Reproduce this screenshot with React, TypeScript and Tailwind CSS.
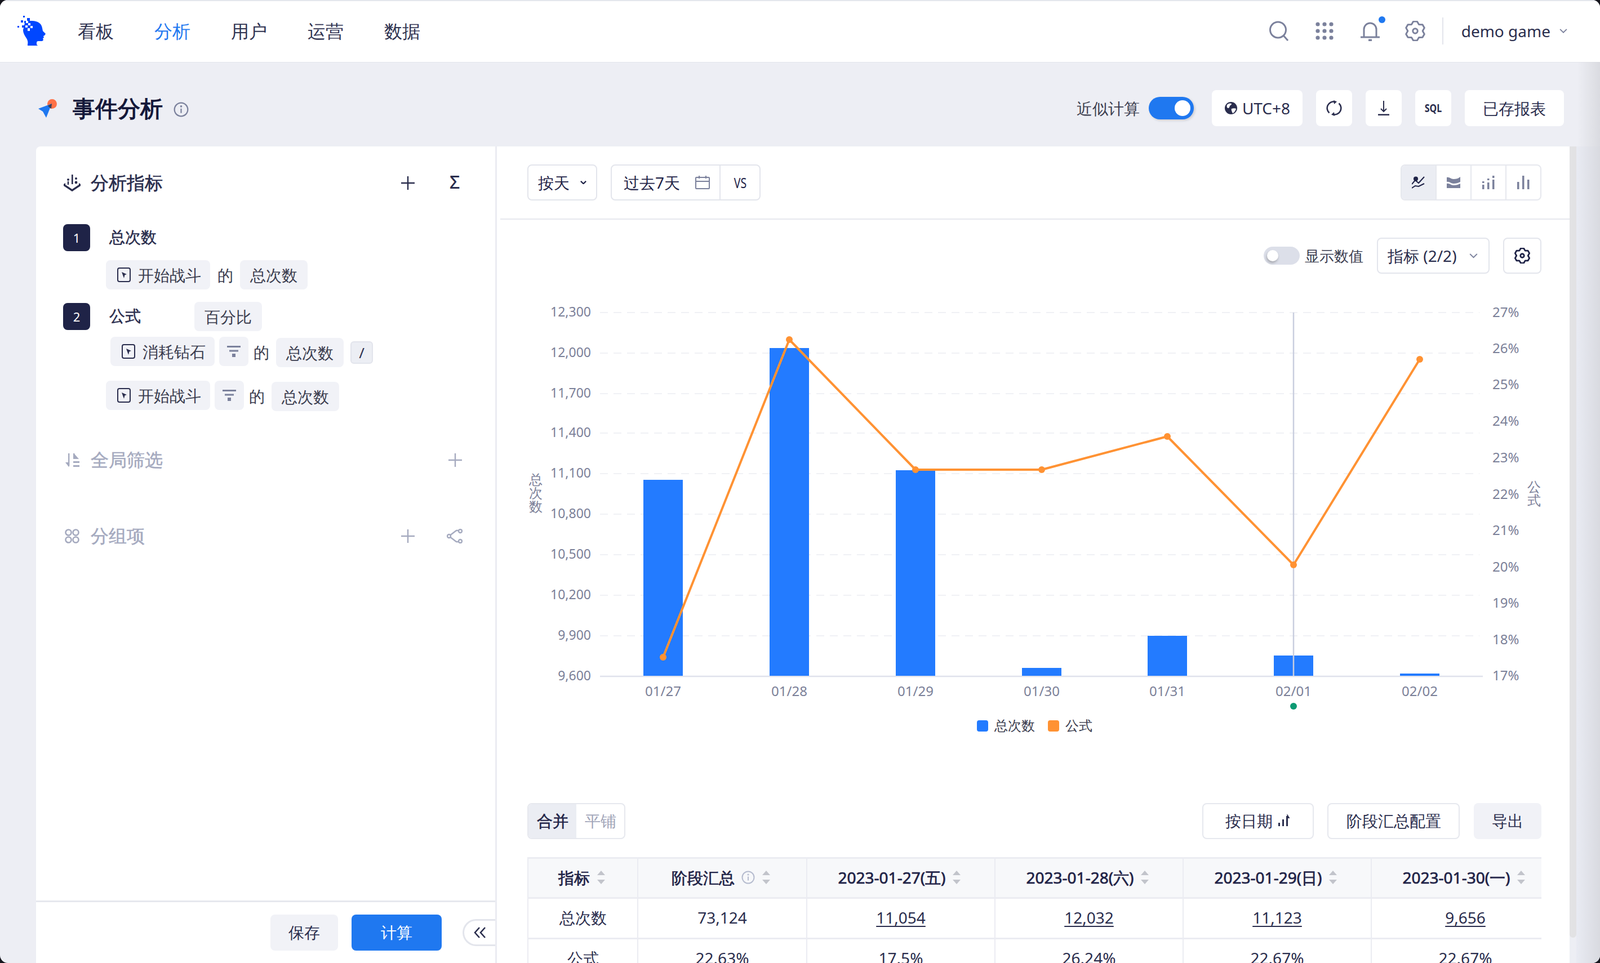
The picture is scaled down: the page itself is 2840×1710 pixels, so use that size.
import type { ReactNode } from 'react';

const gearPath = (R: number, r: number, c: number) => {
  const pts: string[] = [];
  for (let i = 0; i < 6; i++) {
    const a = (i * 60 - 90) * (Math.PI / 180);
    [
      [r, -30],
      [R, -11],
      [R, 11],
    ].forEach(([rad, off]) => {
      const t = a + (off * Math.PI) / 180;
      pts.push(`${(c + rad * Math.cos(t)).toFixed(2)} ${(c + rad * Math.sin(t)).toFixed(2)}`);
    });
  }
  return `M${pts.join('L')}Z`;
};

const Gear = ({ size, color, sw = 2 }: { size: number; color: string; sw?: number }) => (
  <svg width={size} height={size} viewBox="0 0 24 24" fill="none" stroke={color} strokeWidth={sw} strokeLinejoin="round">
    <path d={gearPath(11.5, 8.8, 12)} />
    <circle cx="12" cy="12" r="2.8" />
  </svg>
);

const Logo = () => (
  <svg width="50" height="54" viewBox="0 0 50 54" fill="#0047ff">
    <path d="M14 9h12c10 0 17 5 18 13l1 5 5 5-2 3-2 1 1 3-2 1 1 3-2 2h-7c-2 0-3 1-3 3v3l2 2H18v-2c1-4 0-8-2-11-3-5-6-9-6-15z" />
    <g fill="#fff">
      <rect x="15" y="9" width="4" height="4" />
      <rect x="19" y="13" width="4" height="4" />
      <rect x="14" y="17" width="4" height="4" />
      <rect x="23" y="18" width="4" height="4" />
      <rect x="18" y="22" width="4" height="5" />
    </g>
    <rect x="10" y="0" width="3" height="3" />
    <rect x="17" y="4" width="5" height="5" />
    <rect x="6" y="8" width="4" height="4" />
    <rect x="12" y="9" width="3" height="4" />
    <rect x="0" y="18" width="3" height="3" />
    <rect x="8" y="17" width="4" height="4" />
  </svg>
);

const EventIcon = () => (
  <svg width="24" height="26" viewBox="0 0 24 26" fill="none">
    <rect x="1" y="1" width="22" height="24" rx="3" stroke="#2a2d4d" strokeWidth="2" />
    <path d="M8 8l9 4-3.500 1.200L12 19z" fill="#2a2d4d" />
  </svg>
);

const FilterIcon = () => (
  <svg width="24" height="20" viewBox="0 0 24 20" fill="#7b819c">
    <rect x="0" y="0" width="24" height="3" />
    <rect x="4" y="7.500" width="16" height="3" />
    <rect x="9" y="14" width="6" height="6" />
  </svg>
);

const Plus = ({ color, size = 24 }: { color: string; size?: number }) => (
  <svg width={size} height={size} viewBox="0 0 24 24" stroke={color} strokeWidth="2.4">
    <path d="M12 0v24M0 12h24" />
  </svg>
);

const Sort = () => (
  <svg width="16" height="24" viewBox="0 0 16 24" fill="#c2c4cb" className="shrink-0">
    <path d="M8 0l7 8H1zM1 16h14l-7 8z" />
  </svg>
);

const Info = ({ size, color }: { size: number; color: string }) => (
  <svg width={size} height={size} viewBox="0 0 24 24" fill="none" stroke={color} strokeWidth="2">
    <circle cx="12" cy="12" r="10.500" />
    <path d="M12 10.500v7" />
    <circle cx="12" cy="7" r="0.600" fill={color} />
  </svg>
);

const Chevron = ({ color = '#7b819c', w = 16, sw = 2.2 }: { color?: string; w?: number; sw?: number }) => (
  <svg width={w} height={w * 0.6} viewBox="0 0 16 10" fill="none" stroke={color} strokeWidth={sw}>
    <path d="M1 1l7 7 7-7" />
  </svg>
);

const Chip = ({ children, className = '' }: { children: ReactNode; className?: string }) => (
  <div className={`flex h-[52px] items-center rounded-[8px] bg-[#f1f2f7] text-[28px] text-[#3a3c4e] ${className}`}>
    {children}
  </div>
);

const EventChip = ({ name }: { name: string }) => (
  <Chip className="w-[185px] pl-[20px] gap-[13px] text-[#2a2d4d]">
    <EventIcon />
    {name}
  </Chip>
);

const FilterChip = () => (
  <Chip className="ml-[8px] w-[52px] justify-center">
    <FilterIcon />
  </Chip>
);

const CountChip = ({ className = '' }: { className?: string }) => (
  <Chip className={`w-[120px] justify-center ${className}`}>总次数</Chip>
);

const De = ({ className = '' }: { className?: string }) => (
  <span className={`text-[28px] text-[#3a3c4e] ${className}`}>的</span>
);

const Badge = ({ n }: { n: number }) => (
  <div className="flex h-[48px] w-[48px] shrink-0 items-center justify-center rounded-[8px] bg-[#1f2347] text-[22px] text-white">
    {n}
  </div>
);

const WhiteBtn = ({ children, className = '' }: { children: ReactNode; className?: string }) => (
  <div className={`flex h-[64px] items-center justify-center rounded-[8px] bg-white text-[#2a2d4d] ${className}`}>
    {children}
  </div>
);

const gridYs = [555, 627, 699, 769, 841, 913, 985, 1057, 1129, 1201];
const leftLabels = ['12,300', '12,000', '11,700', '11,400', '11,100', '10,800', '10,500', '10,200', '9,900', '9,600'];
const rightLabels: [string, number][] = [
  ['27%', 555],
  ['26%', 619],
  ['25%', 683],
  ['24%', 748],
  ['23%', 813],
  ['22%', 878],
  ['21%', 942],
  ['20%', 1007],
  ['19%', 1071],
  ['18%', 1136],
  ['17%', 1200],
];
const days = [
  { x: 1177, label: '01/27', top: 852, line: 1167 },
  { x: 1401, label: '01/28', top: 618, line: 603 },
  { x: 1625, label: '01/29', top: 835, line: 834 },
  { x: 1849, label: '01/30', top: 1186, line: 834 },
  { x: 2072, label: '01/31', top: 1129, line: 775 },
  { x: 2296, label: '02/01', top: 1164, line: 1003 },
  { x: 2520, label: '02/02', top: 1196, line: 638 },
];

const Chart = () => (
  <div className="relative">
    <svg width="1904" height="830" viewBox="882 500 1904 830" className="block font-[Inter,'Noto_Sans_CJK_SC',sans-serif]">
      {gridYs.map((y) => (
        <line key={y} x1="1065" x2="2626" y1={y} y2={y} stroke="#f0f1f5" strokeWidth="2" strokeDasharray="14 10" />
      ))}
      <line x1="1065" x2="2632" y1="1201" y2="1201" stroke="#e0e2ec" strokeWidth="2.500" />
      {leftLabels.map((t, i) => (
        <text key={t} x="1049" y={gridYs[i] + 7} textAnchor="end" fontSize="23" fill="#7b8098">
          {t}
        </text>
      ))}
      {rightLabels.map(([t, y]) => (
        <text key={t} x="2649" y={y + 8} fontSize="24" fill="#7b8098">
          {t}
        </text>
      ))}
      {days.map((d) => (
        <rect key={d.x} x={d.x - 35} y={d.top} width="70" height={1200 - d.top} fill="#237bff" />
      ))}
      {days.map((d) => (
        <text key={d.label} x={d.x} y="1236" textAnchor="middle" fontSize="24" fill="#7b8098">
          {d.label}
        </text>
      ))}
      <line x1="2296" x2="2296" y1="555" y2="1200" stroke="#c9cede" strokeWidth="2.500" />
      <polyline
        points={days.map((d) => `${d.x},${d.line}`).join(' ')}
        fill="none"
        stroke="#ff9233"
        strokeWidth="4"
        strokeLinejoin="round"
      />
      {days.map((d) => (
        <circle key={d.x} cx={d.x} cy={d.line} r="6" fill="#ff9233" />
      ))}
      <circle cx="2296" cy="1254" r="6" fill="#0e9a73" />
      <rect x="1734" y="1279" width="20" height="20" rx="4" fill="#237bff" />
      <text x="1765" y="1297" fontSize="24" fill="#3a3c4e">
        总次数
      </text>
      <rect x="1860" y="1279" width="20" height="20" rx="4" fill="#ff9233" />
      <text x="1891" y="1297" fontSize="24" fill="#3a3c4e">
        公式
      </text>
    </svg>
    <div className="absolute left-[57px] top-[339px] w-[24px] text-[24px] leading-[24px] text-[#7b8098]">总次数</div>
    <div className="absolute left-[1829px] top-[352px] w-[24px] text-[24px] leading-[24px] text-[#7b8098]">公式</div>
  </div>
);

const dateCols = [
  ['2023-01-27(五)', '11,054', '17.5%'],
  ['2023-01-28(六)', '12,032', '26.24%'],
  ['2023-01-29(日)', '11,123', '22.67%'],
  ['2023-01-30(一)', '9,656', '22.67%'],
];

const headCell =
  'flex items-center justify-center gap-[12px] border-r-[2px] border-[#ebecf2] bg-[#f7f8fa] pb-[3px] text-[#1f2347] [-webkit-text-stroke:0.7px_#1f2347]';
const bodyCell = 'flex items-center justify-center border-r-[2px] border-t-[3px] border-[#ebecf2] pb-[3px] text-[#2a2d4d]';

const Table = () => (
  <div className="w-[1800px] overflow-hidden border-t-[3px] border-l-[2px] border-[#ebecf2] font-['Liberation_Sans','Noto_Sans_CJK_SC',sans-serif] text-[28px]">
    <div className="grid w-[2134px] grid-cols-[195px_300px_334px_334px_334px_637px] grid-rows-[68px_72px_72px]">
      <div className={`${headCell} pr-[4px]`}>
        指标
        <Sort />
      </div>
      <div className={`${headCell} pr-[4px]`}>
        阶段汇总
        <Info size={24} color="#b6bccf" />
        <Sort />
      </div>
      {dateCols.map((c) => (
        <div key={c[0]} className={`${headCell} ${c[0].endsWith('(一)') ? 'pr-[307px]' : 'pr-[4px]'}`}>
          {c[0]}
          <Sort />
        </div>
      ))}
      <div className={bodyCell}>总次数</div>
      <div className={bodyCell}>73,124</div>
      {dateCols.map((c) => (
        <div key={c[0]} className={`${bodyCell} ${c[0].endsWith('(一)') ? 'pr-[303px]' : ''}`}>
          <span className="underline underline-offset-[4px]">{c[1]}</span>
        </div>
      ))}
      <div className={bodyCell}>公式</div>
      <div className={bodyCell}>22.63%</div>
      {dateCols.map((c) => (
        <div key={c[0]} className={`${bodyCell} ${c[0].endsWith('(一)') ? 'pr-[303px]' : ''}`}>
          {c[2]}
        </div>
      ))}
    </div>
  </div>
);

export default function App() {
  return (
    <div className="h-[1710px] w-[2840px] overflow-hidden bg-[#15151c]">
      <div className="relative flex h-full flex-col overflow-hidden rounded-[14px] bg-[#edeef4] font-[Inter,'Noto_Sans_CJK_SC',sans-serif]">
        <header className="flex h-[111px] shrink-0 items-center border-b-[1px] border-t-[2px] border-b-[#e3e5ec] border-t-[#e3e6ec] bg-white pb-[2px] pl-[31px] pr-[58px]">
          <Logo />
          <nav className="ml-[57px] flex gap-[72px] text-[32px] text-[#2f3250]">
            <span>看板</span>
            <span className="text-[#1f78f0]">分析</span>
            <span>用户</span>
            <span>运营</span>
            <span>数据</span>
          </nav>
          <div className="ml-auto flex items-center">
            <svg width="36" height="36" viewBox="0 0 36 36" fill="none" stroke="#7b819c" strokeWidth="3">
              <circle cx="16.500" cy="16" r="14" />
              <path d="M26 26l8 9" />
            </svg>
            <svg width="32" height="32" viewBox="0 0 32 32" fill="#7b819c" className="ml-[47px]">
              {[4, 16, 28].map((y) =>
                [4, 16, 28].map((x) => <circle key={`${x}-${y}`} cx={x} cy={y} r="3.600" />),
              )}
            </svg>
            <div className="relative ml-[47px]">
              <svg width="36" height="36" viewBox="0 0 36 36" fill="none" stroke="#7b819c" strokeWidth="3" className="block">
                <path d="M7 28V15a11 11 0 0 1 22 0v13" />
                <path d="M1 29h34" />
                <path d="M15 34.500h6" strokeWidth="4" />
              </svg>
              <span className="absolute right-[-9px] top-[-8px] h-[12px] w-[12px] rounded-full bg-[#1f78f0]" />
            </div>
            <div className="ml-[44px]">
              <Gear size={36} color="#7b819c" />
            </div>
            <span className="ml-[30px] h-[48px] w-[2px] bg-[#e3e5ec]" />
            <span className="ml-[32px] text-[28px] text-[#2a2d4d]">demo game</span>
            <span className="ml-[16px]">
              <Chevron w={14} />
            </span>
          </div>
        </header>

        <div className="flex h-[149px] shrink-0 items-start pl-[68px] pr-[64px] pt-[49px]">
          <div className="flex h-[64px] items-center">
            <svg width="33" height="33" viewBox="0 0 33 33">
              <circle cx="24.500" cy="8.500" r="8.500" fill="#ff7248" />
              <path d="M24 8L0 17l8 5 6 11z" fill="#1f78f0" />
              <path d="M24 8l-7 4 3 3 3 2z" fill="#3d3f55" />
            </svg>
            <h1 className="ml-[28px] text-[40px] font-semibold leading-none text-[#14183a]">事件分析</h1>
            <span className="ml-[19px] mt-[4px]">
              <Info size={27} color="#7b819c" />
            </span>
          </div>
          <div className="ml-auto flex h-[64px] items-center">
            <span className="text-[28px] text-[#3a3c4e]">近似计算</span>
            <div className="relative ml-[16px] h-[40px] w-[80px] rounded-full bg-[#1f78f0] shadow-[2px_2px_4px_rgba(0,0,0,0.15)]">
              <span className="absolute right-[6px] top-[6px] h-[28px] w-[28px] rounded-full bg-white" />
            </div>
            <WhiteBtn className="ml-[32px] w-[161px] gap-[8px] font-['Liberation_Sans','Noto_Sans_CJK_SC',sans-serif] text-[28px]">
              <svg width="24" height="24" viewBox="0 0 24 24">
                <circle cx="12" cy="12" r="11" fill="#2a2d4d" />
                <path d="M5 6c3-3 6-3 8-2 0 3-2 2-3 4s-1 4-3 4-3-3-2-6zM13 13c3-1 6-1 8 0-1 4-4 8-6 8-1-2-3-6-2-8z" fill="#fff" />
              </svg>
              UTC+8
            </WhiteBtn>
            <WhiteBtn className="ml-[24px] w-[64px]">
              <svg width="28" height="28" viewBox="0 0 28 28" fill="none" stroke="#2a2d4d" strokeWidth="2.600">
                <path d="M5.500 22.500A11.500 11.500 0 0 1 15 2.600" />
                <path d="M22.500 5.500A11.500 11.500 0 0 1 13 25.400" />
                <path d="M13 0l6 2.500-5 4.500z" fill="#2a2d4d" stroke="none" />
                <path d="M15 28l-6-2.500 5-4.500z" fill="#2a2d4d" stroke="none" />
              </svg>
            </WhiteBtn>
            <WhiteBtn className="ml-[24px] w-[64px]">
              <svg width="24" height="26" viewBox="0 0 24 26" fill="none" stroke="#2a2d4d" strokeWidth="2">
                <path d="M12 0v18M7 14l5 5 5-5" />
                <path d="M2 25h20" strokeWidth="3" />
              </svg>
            </WhiteBtn>
            <WhiteBtn className="ml-[24px] w-[64px]">
              <span className="inline-block scale-x-[0.8] text-[20px] font-bold">SQL</span>
            </WhiteBtn>
            <WhiteBtn className="ml-[24px] w-[176px] text-[28px]">已存报表</WhiteBtn>
          </div>
        </div>

        <main className="flex min-h-0 flex-1 pl-[64px]">
          <aside className="flex w-[818px] shrink-0 flex-col rounded-tl-[8px] border-r-[3px] border-[#ebecf2] bg-white pt-[49px]">
            <div className="flex h-[32px] items-center pl-[49px]">
              <svg width="30" height="30" viewBox="0 0 30 30" fill="#2a2d4d">
                <rect x="14" y="0" width="2.600" height="17" />
                <circle cx="8" cy="9" r="2" />
                <rect x="6.800" y="12" width="2.400" height="6" />
                <circle cx="22" cy="7" r="2" />
                <circle cx="22" cy="14" r="2.400" />
                <path d="M0 17l3-2v3l12 8 12-8v-3l3 2v3L15 30 0 20z" />
              </svg>
              <span className="mb-[2px] ml-[18px] text-[32px] font-medium text-[#2a2d4d] [-webkit-text-stroke:0.6px_#2a2d4d]">分析指标</span>
              <span className="ml-[423px]">
                <Plus color="#2a2d4d" />
              </span>
              <span className="mb-[4px] ml-[62px] text-[32px] font-medium leading-none text-[#2a2d4d]">Σ</span>
            </div>

            <div className="mt-[57px] flex h-[48px] items-center pl-[48px]">
              <Badge n={1} />
              <span className="mb-[5px] ml-[34px] text-[28px] font-medium text-[#2a2d4d] [-webkit-text-stroke:0.5px_#2a2d4d]">总次数</span>
            </div>
            <div className="ml-[124px] mt-[16px] flex items-center">
              <EventChip name="开始战斗" />
              <De className="ml-[13px]" />
              <CountChip className="ml-[12px]" />
            </div>

            <div className="mt-[22px] flex h-[50px] items-start pl-[48px]">
              <div className="mt-[2px] flex items-center">
                <Badge n={2} />
                <span className="mb-[5px] ml-[34px] text-[28px] font-medium text-[#2a2d4d] [-webkit-text-stroke:0.5px_#2a2d4d]">公式</span>
              </div>
              <Chip className="ml-[95px] h-[48px] w-[120px] justify-center">百分比</Chip>
            </div>

            <div className="ml-[132px] mt-[12px] flex h-[54px] items-start">
              <EventChip name="消耗钻石" />
              <FilterChip />
              <De className="ml-[9px] mt-[6px]" />
              <CountChip className="ml-[12px] mt-[2px]" />
              <div className="ml-[12px] mt-[8px] flex h-[40px] w-[40px] items-center justify-center rounded-[6px] border-[2px] border-[#e2e4ec] bg-[#eceef4] text-[26px] text-[#2a2d4d]">
                /
              </div>
            </div>

            <div className="ml-[124px] mt-[24px] flex h-[54px] items-start">
              <EventChip name="开始战斗" />
              <FilterChip />
              <De className="ml-[9px] mt-[6px]" />
              <CountChip className="ml-[12px] mt-[2px]" />
            </div>

            <div className="mt-[71px] flex h-[32px] items-center pl-[52px] text-[32px] font-medium text-[#a5aabf]">
              <svg width="26" height="26" viewBox="0 0 26 26" fill="#a5aabf">
                <rect x="5" y="1" width="2.400" height="22" />
                <path d="M0 17l6 8 1-1V17z" />
                <rect x="14" y="1" width="2.400" height="10" />
                <path d="M16 2l8 9h-8z" />
                <rect x="14" y="15" width="11" height="3" />
                <rect x="14" y="22" width="11" height="3" />
              </svg>
              <span className="mb-[3px] ml-[19px] [-webkit-text-stroke:0.5px_#a5aabf]">全局筛选</span>
              <span className="ml-[507px]">
                <Plus color="#a5aabf" />
              </span>
            </div>

            <div className="mt-[103px] flex h-[32px] items-center pl-[51px] text-[32px] font-medium text-[#a5aabf]">
              <svg width="26" height="26" viewBox="0 0 26 26" fill="none" stroke="#a5aabf" strokeWidth="2.600">
                <circle cx="6.500" cy="6.500" r="5" />
                <circle cx="19.500" cy="6.500" r="5" />
                <circle cx="6.500" cy="19.500" r="5" />
                <circle cx="19.500" cy="19.500" r="5" />
              </svg>
              <span className="mb-[3px] ml-[20px] [-webkit-text-stroke:0.5px_#a5aabf]">分组项</span>
              <span className="ml-[455px]">
                <Plus color="#a5aabf" />
              </span>
              <svg width="28" height="26" viewBox="0 0 28 26" fill="none" stroke="#a5aabf" strokeWidth="2.400" className="ml-[57px]">
                <circle cx="4" cy="13" r="3" />
                <circle cx="24" cy="4" r="3" />
                <circle cx="24" cy="22" r="3" />
                <path d="M6.500 11L17 3h4M6.500 15L17 23h4" />
              </svg>
            </div>

            <div className="mt-auto flex h-[111px] shrink-0 items-start border-t-[3px] border-[#e6e8ee] pl-[416px] pt-[22px]">
              <div className="flex h-[64px] w-[120px] items-center justify-center rounded-[8px] bg-[#f1f2f7] pb-[2px] text-[28px] text-[#2a2d4d]">
                保存
              </div>
              <div className="ml-[24px] flex h-[64px] w-[160px] items-center justify-center rounded-[8px] bg-[#1f78f0] pb-[2px] text-[28px] text-white">
                计算
              </div>
              <div className="ml-[37px] mt-[8px] flex h-[48px] w-[58px] items-center justify-center rounded-l-full border-[3px] border-r-0 border-[#e3e5ec] bg-white">
                <svg width="22" height="22" viewBox="0 0 22 22" fill="none" stroke="#2a2d4d" strokeWidth="2.600">
                  <path d="M10 2L2 11l8 9M20 2l-8 9 8 9" />
                </svg>
              </div>
            </div>
          </aside>

          <section className="flex min-w-0 flex-1 flex-col bg-white">
            <div className="ml-[6px] flex h-[130px] shrink-0 items-start border-b-[2px] border-[#e6e8ee] pl-[48px] pr-[50px] pt-[32px]">
              <div className="flex h-[64px] w-[124px] items-center rounded-[8px] border-[2px] border-[#e3e5ec] pl-[17px] text-[28px] text-[#1f2347]">
                按天
                <span className="ml-[19px]">
                  <Chevron color="#1f2347" w={11} sw={3.4} />
                </span>
              </div>
              <div className="ml-[24px] flex h-[64px] w-[266px] items-center rounded-[8px] border-[2px] border-[#e3e5ec] text-[28px] text-[#1f2347]">
                <div className="flex h-full w-[193px] items-center border-r-[2px] border-[#e3e5ec] pl-[21px]">
                  过去7天
                  <svg width="26" height="24" viewBox="0 0 26 24" fill="none" stroke="#7b819c" strokeWidth="2" className="ml-[27px]">
                    <rect x="1" y="3" width="24" height="20" rx="1" />
                    <path d="M1 10h24M7 0v5M19 0v5" />
                  </svg>
                </div>
                <span className="ml-[20px] inline-block scale-x-75 font-['Liberation_Sans',sans-serif] text-[26px]">VS</span>
              </div>
              <div className="ml-auto flex h-[64px] w-[250px] overflow-hidden rounded-[8px] border-[2px] border-[#e6e8ee]">
                <div className="flex flex-1 items-center justify-center border-r-[2px] border-[#e6e8ee] bg-[#ebedf3]">
                  <svg width="24" height="22" viewBox="0 0 24 22" fill="none" stroke="#1f2347" strokeWidth="2">
                    <circle cx="7" cy="4.500" r="4" fill="#1f2347" stroke="none" />
                    <path d="M0 14l6-7 6 5 10-11" />
                    <path d="M0 21l6-4 6 1 10-5" />
                  </svg>
                </div>
                <div className="flex flex-1 items-center justify-center border-r-[2px] border-[#e6e8ee]">
                  <svg width="24" height="20" viewBox="0 0 24 20" fill="#7b819c">
                    <path d="M0 1c5-1 7 3 12 3 5 0 8-1 12-4v9c-4 2-7 3-12 3-5 0-7-4-12-3z" />
                    <path d="M0 12c5-1 7 3 12 3 5 0 8-1 12-3v8H0z" />
                  </svg>
                </div>
                <div className="flex flex-1 items-center justify-center border-r-[2px] border-[#e6e8ee]">
                  <svg width="22" height="24" viewBox="0 0 22 24" fill="#7b819c">
                    <rect x="0" y="10" width="3.500" height="3" />
                    <rect x="0" y="16" width="3.500" height="8" />
                    <rect x="9" y="5" width="3.500" height="3" />
                    <rect x="9" y="12" width="3.500" height="12" />
                    <rect x="18" y="0" width="3.500" height="4" />
                    <rect x="18" y="7" width="3.500" height="17" />
                  </svg>
                </div>
                <div className="flex flex-1 items-center justify-center">
                  <svg width="22" height="24" viewBox="0 0 22 24" fill="#7b819c">
                    <rect x="0" y="11" width="3.500" height="13" />
                    <rect x="9" y="0" width="3.500" height="24" />
                    <rect x="18" y="7" width="3.500" height="17" />
                  </svg>
                </div>
              </div>
            </div>

            <div className="mt-[32px] flex h-[64px] shrink-0 items-center justify-end pr-[50px]">
              <div className="relative h-[32px] w-[64px] rounded-full bg-[#dcdfe9]">
                <span className="absolute left-[6px] top-[6px] h-[20px] w-[20px] rounded-full bg-white shadow-[-1px_3px_4px_rgba(0,0,0,0.25)]" />
              </div>
              <span className="ml-[9px] text-[26px] text-[#3a3c4e]">显示数值</span>
              <div className="ml-[24px] flex h-[64px] w-[200px] items-center rounded-[8px] border-[2px] border-[#e3e5ec] pl-[17px] text-[28px] text-[#2a2d4d]">
                指标 (2/2)
                <span className="ml-[22px]">
                  <Chevron w={15} />
                </span>
              </div>
              <div className="ml-[24px] flex h-[64px] w-[68px] items-center justify-center rounded-[8px] border-[2px] border-[#e3e5ec]">
                <Gear size={28} color="#1f2347" sw={2.400} />
              </div>
            </div>

            <div className="mt-[14px] shrink-0">
              <Chart />
            </div>

            <div className="ml-[54px] mr-[50px] mt-[96px] flex h-[64px] shrink-0 items-center text-[28px] text-[#2a2d4d]">
              <div className="flex h-full w-[174px] overflow-hidden rounded-[8px] border-[2px] border-[#e6e8ee]">
                <div className="flex w-[85px] items-center justify-center bg-[#ebedf3] pb-[2px] text-[#1f2347] [-webkit-text-stroke:0.6px_#1f2347]">合并</div>
                <div className="flex flex-1 items-center justify-center pb-[2px] text-[#a0a4b8]">平铺</div>
              </div>
              <div className="ml-auto flex h-full w-[198px] items-center justify-center gap-[10px] rounded-[8px] border-[2px] border-[#e6e8ee] pb-[2px]">
                按日期
                <svg width="22" height="24" viewBox="0 0 22 24" fill="#2a2d4d">
                  <rect x="0" y="16" width="3" height="6" />
                  <rect x="7" y="10" width="3" height="12" />
                  <rect x="14" y="4" width="3" height="18" />
                  <path d="M15.500 0l5 8h-5z" />
                </svg>
              </div>
              <div className="ml-[24px] flex h-full w-[235px] items-center justify-center rounded-[8px] border-[2px] border-[#e6e8ee] pb-[2px]">
                阶段汇总配置
              </div>
              <div className="ml-[25px] flex h-full w-[120px] items-center justify-center rounded-[8px] bg-[#f1f2f7] pb-[2px]">导出</div>
            </div>

            <div className="ml-[54px] mt-[32px] shrink-0">
              <Table />
            </div>
          </section>

          <div className="w-[12px] shrink-0 self-start">
            <div className="h-[1405px] rounded-b-[6px] bg-[#e2e2e4]" />
          </div>
          <div className="w-[42px] shrink-0 bg-[#e8eaf2]" />
        </main>

        <div className="pointer-events-none absolute bottom-0 right-0 top-[110px] w-[40px] bg-linear-to-r from-transparent to-[#d2d3d8]/70" />
      </div>
    </div>
  );
}
